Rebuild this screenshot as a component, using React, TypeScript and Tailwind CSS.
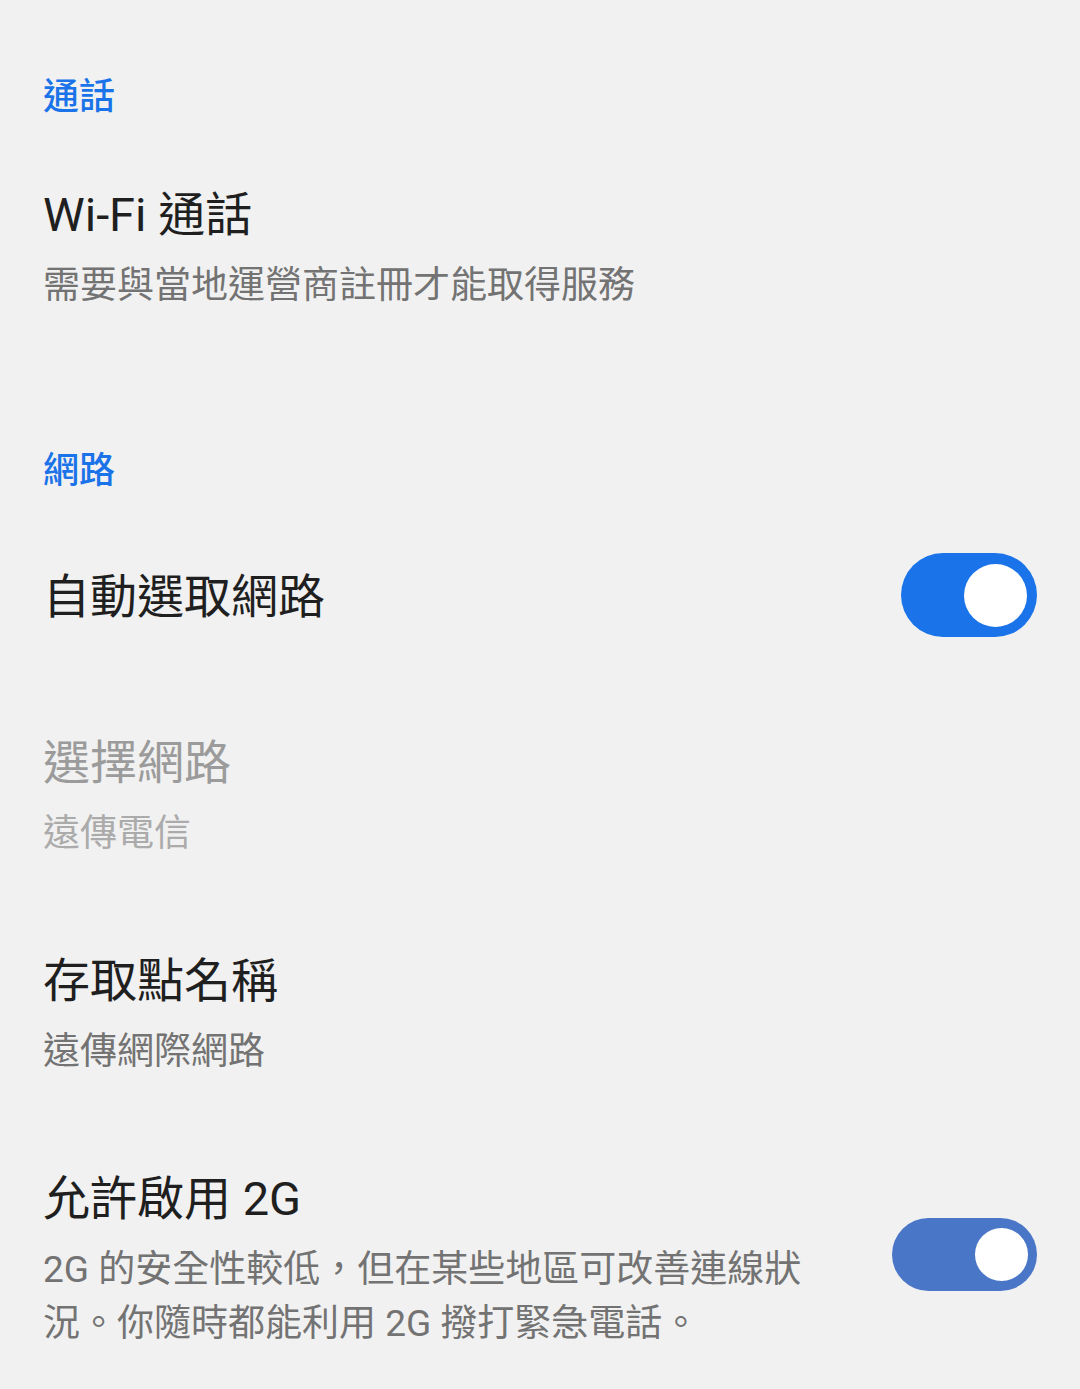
import React, { useState } from "react";

const font = {
  fontFamily: "Roboto, 'Noto Sans CJK TC', 'Noto Sans', sans-serif",
};

interface ToggleProps {
  on: boolean;
  onChange: () => void;
  large?: boolean;
}

const Toggle: React.FC<ToggleProps> = ({ on, onChange, large }) => {
  if (large) {
    return (
      <button
        type="button"
        onClick={onChange}
        className={`flex items-center shrink-0 w-[136px] h-[84px] rounded-full px-[10px] ${
          on ? "bg-[#1a73e8] justify-end" : "bg-[#9e9e9e] justify-start"
        }`}
      >
        <span className="block w-[63px] h-[63px] rounded-full bg-white" />
      </button>
    );
  }
  return (
    <button
      type="button"
      onClick={onChange}
      className={`flex items-center shrink-0 w-[145px] h-[73px] rounded-full px-[9px] mb-[12px] ${
        on ? "bg-[#4a76c8] justify-end" : "bg-[#9e9e9e] justify-start"
      }`}
    >
      <span className="block w-[53px] h-[53px] rounded-full bg-white" />
    </button>
  );
};

const App: React.FC = () => {
  const [autoNetwork, setAutoNetwork] = useState(true);
  const [allow2g, setAllow2g] = useState(true);

  return (
    <div className="min-h-screen bg-[#f1f1f1] px-[43px]" style={font}>
      {/* 通話 */}
      <div className="pt-[73px] pb-[19px]">
        <h2 className="text-[36px] leading-[48px] font-medium text-[#1a73e8]">
          通話
        </h2>
      </div>
      <div className="py-[45px]">
        <p className="text-[47px] leading-[60px] text-[#1f1f1f]">
          Wi-Fi 通話
        </p>
        <p className="mt-[14px] text-[37px] leading-[54px] text-[#737373]">
          需要與當地運營商註冊才能取得服務
        </p>
      </div>

      {/* 網路 */}
      <div className="pt-[89px] pb-[16px]">
        <h2 className="text-[36px] leading-[48px] font-medium text-[#1a73e8]">
          網路
        </h2>
      </div>
      <div className="flex items-center justify-between min-h-[168px]">
        <p className="text-[47px] leading-[60px] text-[#1f1f1f] pt-[3px]">
          自動選取網路
        </p>
        <Toggle
          large
          on={autoNetwork}
          onChange={() => setAutoNetwork(!autoNetwork)}
        />
      </div>
      <div className="pt-[54px] pb-[45px]">
        <p className="text-[47px] leading-[60px] text-[#9b9b9b]">選擇網路</p>
        <p className="mt-[14px] text-[37px] leading-[54px] text-[#ababab]">
          遠傳電信
        </p>
      </div>
      <div className="py-[45px]">
        <p className="text-[47px] leading-[60px] text-[#1f1f1f]">
          存取點名稱
        </p>
        <p className="mt-[14px] text-[37px] leading-[54px] text-[#737373]">
          遠傳網際網路
        </p>
      </div>
      <div className="flex items-center justify-between pt-[45px] pb-[40px]">
        <div className="w-[775px]">
          <p className="text-[47px] leading-[60px] text-[#1f1f1f]">
            允許啟用 2G
          </p>
          <p className="mt-[14px] text-[37px] leading-[54px] text-[#737373]">
            2G 的安全性較低，但在某些地區可改善連線狀況。你隨時都能利用 2G
            撥打緊急電話。
          </p>
        </div>
        <Toggle on={allow2g} onChange={() => setAllow2g(!allow2g)} />
      </div>
    </div>
  );
};

export default App;
